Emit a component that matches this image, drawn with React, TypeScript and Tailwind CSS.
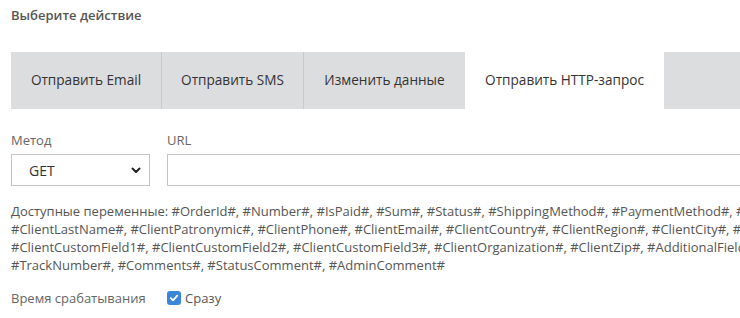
const tabs = [
  { label: 'Отправить Email', w: 'w-[150px]' },
  { label: 'Отправить SMS', w: 'w-[142px]' },
  { label: 'Изменить данные', w: 'w-[162px]' },
  { label: 'Отправить HTTP-запрос', w: 'w-[199px]', active: true },
];

const varLines = [
  'Доступные переменные: #OrderId#, #Number#, #IsPaid#, #Sum#, #Status#, #ShippingMethod#, #PaymentMethod#, #ClientName#,',
  '#ClientLastName#, #ClientPatronymic#, #ClientPhone#, #ClientEmail#, #ClientCountry#, #ClientRegion#, #ClientCity#, #ClientAddress#,',
  '#ClientCustomField1#, #ClientCustomField2#, #ClientCustomField3#, #ClientOrganization#, #ClientZip#, #AdditionalFields#,',
  '#TrackNumber#, #Comments#, #StatusComment#, #AdminComment#',
];

export default function App() {
  return (
    <div className="w-[740px] h-[318px] overflow-hidden bg-white font-['Open_Sans',sans-serif] text-[13px] text-[#555]">
      <div className="w-[1000px] pl-[11px]">
        <div className="pt-[6px] h-[52px] font-semibold text-[#555] leading-[18px]">Выберите действие</div>

        {/* tabs */}
        <div className="flex h-[57px]">
          {tabs.map((t, i) => (
            <div
              key={t.label}
              className={`${t.w} flex items-center justify-center text-[13.6px] text-[#333] ${
                t.active ? 'bg-white' : 'bg-[#dcdddf]'
              } ${i > 0 && !t.active && !tabs[i - 1].active ? 'border-l border-[#c8c9cb]' : ''}`}
            >
              {t.label}
            </div>
          ))}
          <div className="w-[300px] bg-[#dcdddf]" />
        </div>

        {/* method / url */}
        <div className="flex gap-[17px] mt-[22px]">
          <div className="w-[139px]">
            <div className="text-[#666] leading-[18px] mb-[5px]">Метод</div>
            <div className="h-[32px] border border-[#c4c4c4] flex items-center justify-between pl-[17px] pr-[7px] text-[#333] text-[14px]">
              <span>GET</span>
              <svg width="12" height="12" viewBox="0 0 12 12" fill="none">
                <path d="M2.5 4.5 L6 8 L9.5 4.5" stroke="#222" strokeWidth="2" strokeLinecap="round" strokeLinejoin="round" />
              </svg>
            </div>
          </div>
          <div className="w-[700px]">
            <div className="text-[#666] leading-[18px] mb-[5px]">URL</div>
            <div className="h-[32px] border border-[#c4c4c4]" />
          </div>
        </div>

        {/* variables */}
        <div className="mt-[16px] text-[#555] leading-[18px] whitespace-nowrap">
          {varLines.map((l) => (
            <div key={l}>{l}</div>
          ))}
        </div>

        {/* trigger */}
        <div className="flex items-center mt-[15px] leading-[18px]">
          <span className="w-[156px] text-[#666]">Время срабатывания</span>
          <span className="w-[14px] h-[14px] rounded-[3px] bg-[#3b86d8] flex items-center justify-center mr-[4px]">
            <svg width="10" height="10" viewBox="0 0 10 10" fill="none">
              <path d="M1.8 5.2 L4 7.3 L8.3 2.7" stroke="white" strokeWidth="1.8" strokeLinecap="round" strokeLinejoin="round" />
            </svg>
          </span>
          <span className="text-[#555]">Сразу</span>
        </div>
      </div>
    </div>
  );
}
